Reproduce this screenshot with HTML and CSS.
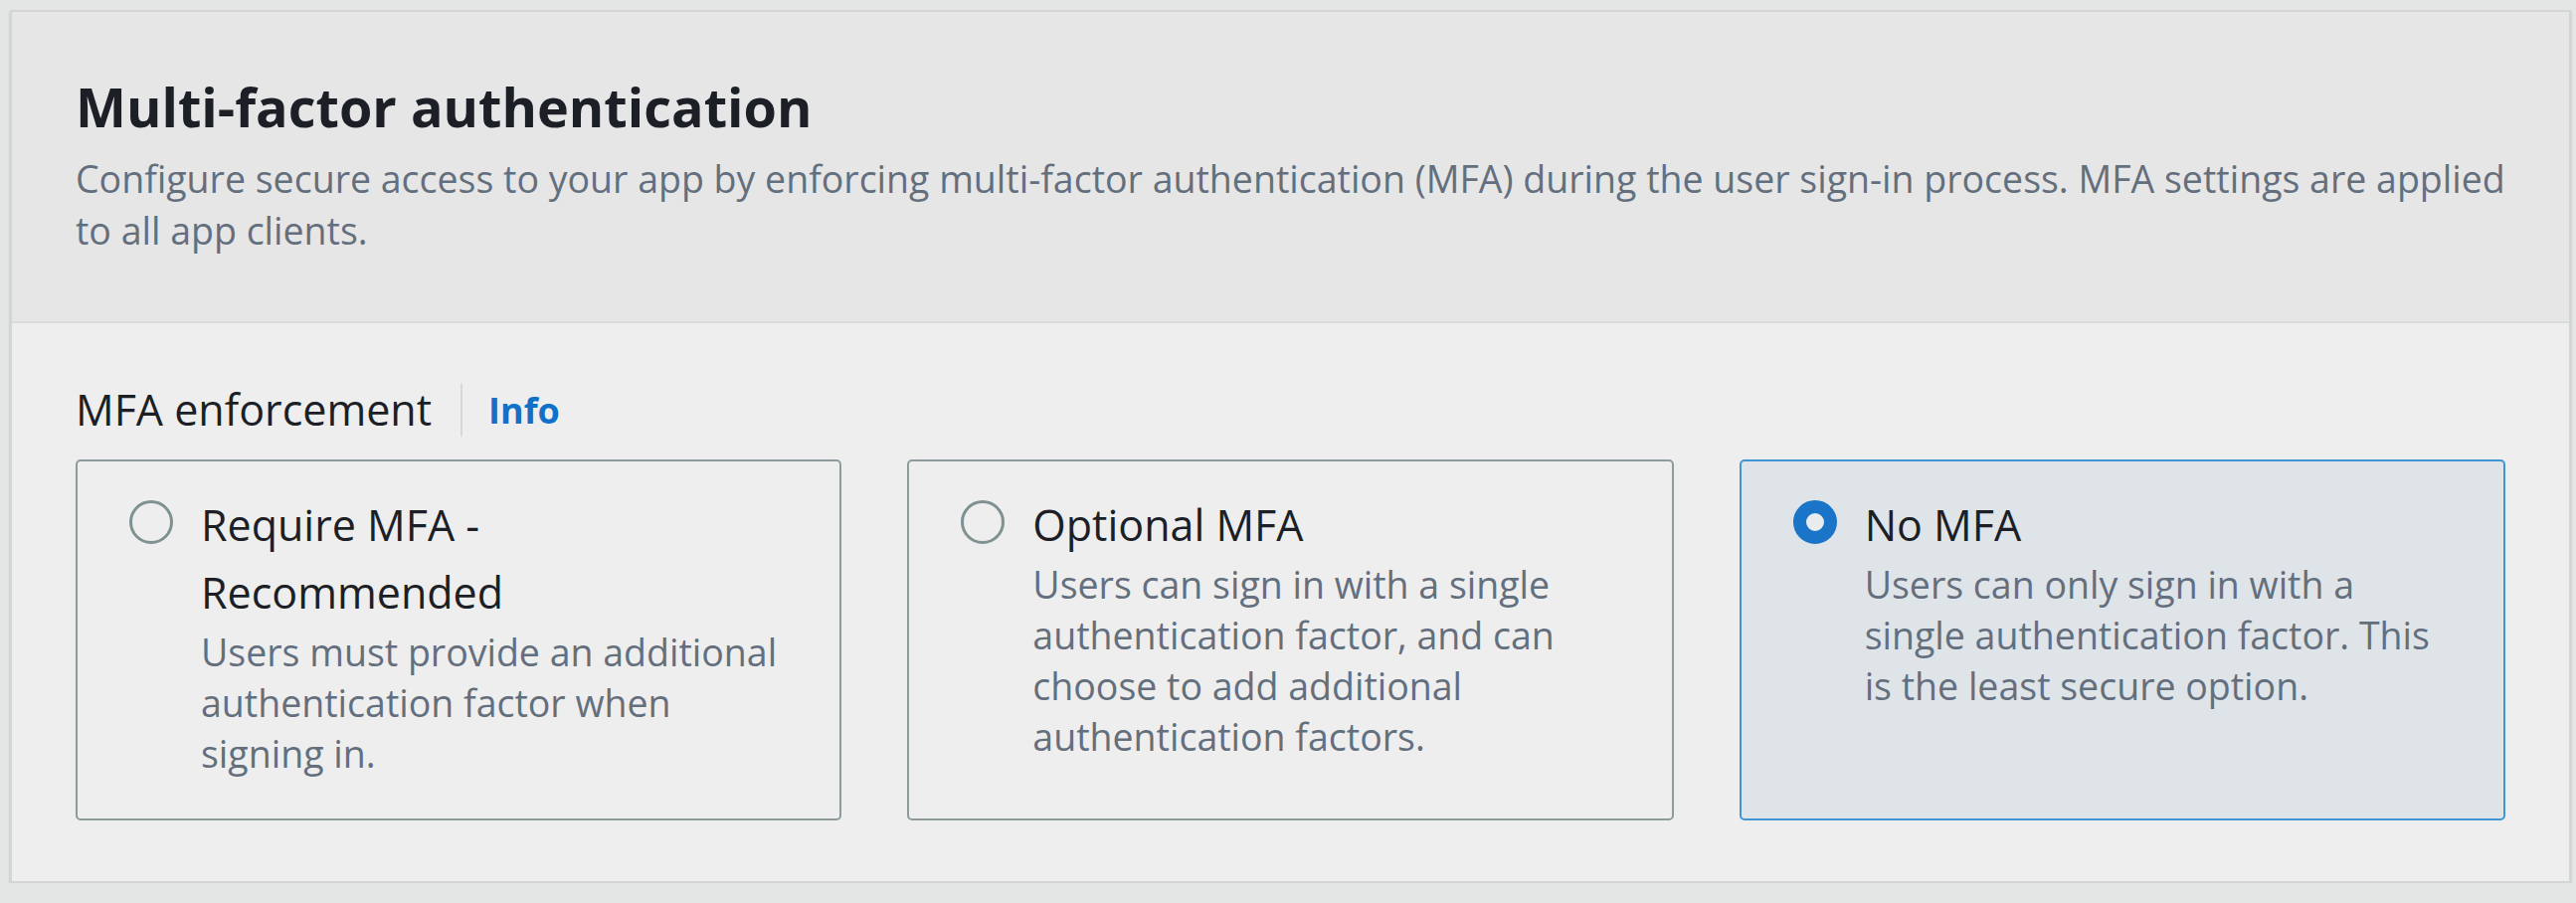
FILE: index.html
```html
<!DOCTYPE html>
<html lang="en">
<head>
<meta charset="utf-8">
<title>Multi-factor authentication</title>
<link rel="stylesheet" href="styles.css">
</head>
<body>
  <section class="container">
    <header class="container-header">
      <h2 class="title">Multi-factor authentication</h2>
      <p class="description">Configure secure access to your app by enforcing multi-factor authentication (MFA) during the user sign-in process. MFA settings are applied to all app clients.</p>
    </header>
    <div class="container-body">
      <div class="field-label">
        <span class="label-text">MFA enforcement</span>
        <span class="divider"></span>
        <a class="info-link">Info</a>
      </div>
      <div class="tiles">
        <label class="tile">
          <span class="radio"></span>
          <span class="tile-text">
            <span class="tile-label">Require MFA - Recommended</span>
            <span class="tile-desc">Users must provide an additional authentication factor when signing in.</span>
          </span>
        </label>
        <label class="tile">
          <span class="radio"></span>
          <span class="tile-text">
            <span class="tile-label">Optional MFA</span>
            <span class="tile-desc">Users can sign in with a single authentication factor, and can choose to add additional authentication factors.</span>
          </span>
        </label>
        <label class="tile tile-selected">
          <span class="radio radio-checked"></span>
          <span class="tile-text">
            <span class="tile-label">No MFA</span>
            <span class="tile-desc">Users can only sign in with a single authentication factor. This is the least secure option.</span>
          </span>
        </label>
      </div>
    </div>
  </section>
</body>
</html>
```

FILE: styles.css
```css
html, body {
  margin: 0;
  padding: 0;
}

body {
  background: #e4e5e5;
  padding: 10px 5px 0 10px;
  font-family: "Open Sans", "Noto Sans", sans-serif;
  color: #1a1d23;
}

.container {
  background: #eeeeee;
  border: 2px solid #d4d6d6;
  box-shadow: 0 2px 2px rgba(0, 0, 0, 0.22);
  height: 878px;
  box-sizing: border-box;
}

.container-header {
  background: #e6e6e6;
  border-bottom: 2px solid #dadbdb;
  padding: 60px 64px 65px 64px;
}

.title {
  margin: 0;
  font-size: 54px;
  line-height: 70px;
  font-weight: 700;
  color: #1c1f26;
}

.description {
  margin: 12px 0 0 0;
  font-size: 37.5px;
  line-height: 52px;
  color: #646f7e;
}

.container-body {
  padding: 57px 64px 0 64px;
}

.field-label {
  display: flex;
  align-items: center;
  height: 60px;
  margin-bottom: 20px;
}

.label-text {
  font-size: 43px;
  line-height: 60px;
  color: #1c1f26;
}

.divider {
  width: 2px;
  height: 53px;
  background: #d6d9d9;
  margin: 0 26px 0 29px;
}

.info-link {
  font-size: 36px;
  font-weight: 700;
  color: #1170c8;
  cursor: pointer;
}

.tiles {
  display: grid;
  grid-template-columns: repeat(3, 1fr);
  column-gap: 66px;
}

.tile {
  display: flex;
  align-items: flex-start;
  height: 363px;
  box-sizing: border-box;
  border: 2px solid #8e9a9b;
  border-radius: 5px;
  padding: 27px 56px 0 52px;
  cursor: pointer;
}

.tile-selected {
  border-color: #3f96d2;
  background: #dfe4e9;
}

.radio {
  flex: none;
  width: 44px;
  height: 44px;
  box-sizing: border-box;
  border-radius: 50%;
  border: 3px solid #7f9191;
  margin-top: 12px;
  margin-right: 28px;
}

.radio-checked {
  border: 13px solid #1a75c8;
  background: #e9ecef;
}

.tile-text {
  display: flex;
  flex-direction: column;
  margin-top: 3px;
}

.tile-label {
  font-size: 43px;
  line-height: 68px;
  color: #1c1f26;
}

.tile-desc {
  font-size: 37.5px;
  line-height: 51px;
  color: #646f7e;
}
```
